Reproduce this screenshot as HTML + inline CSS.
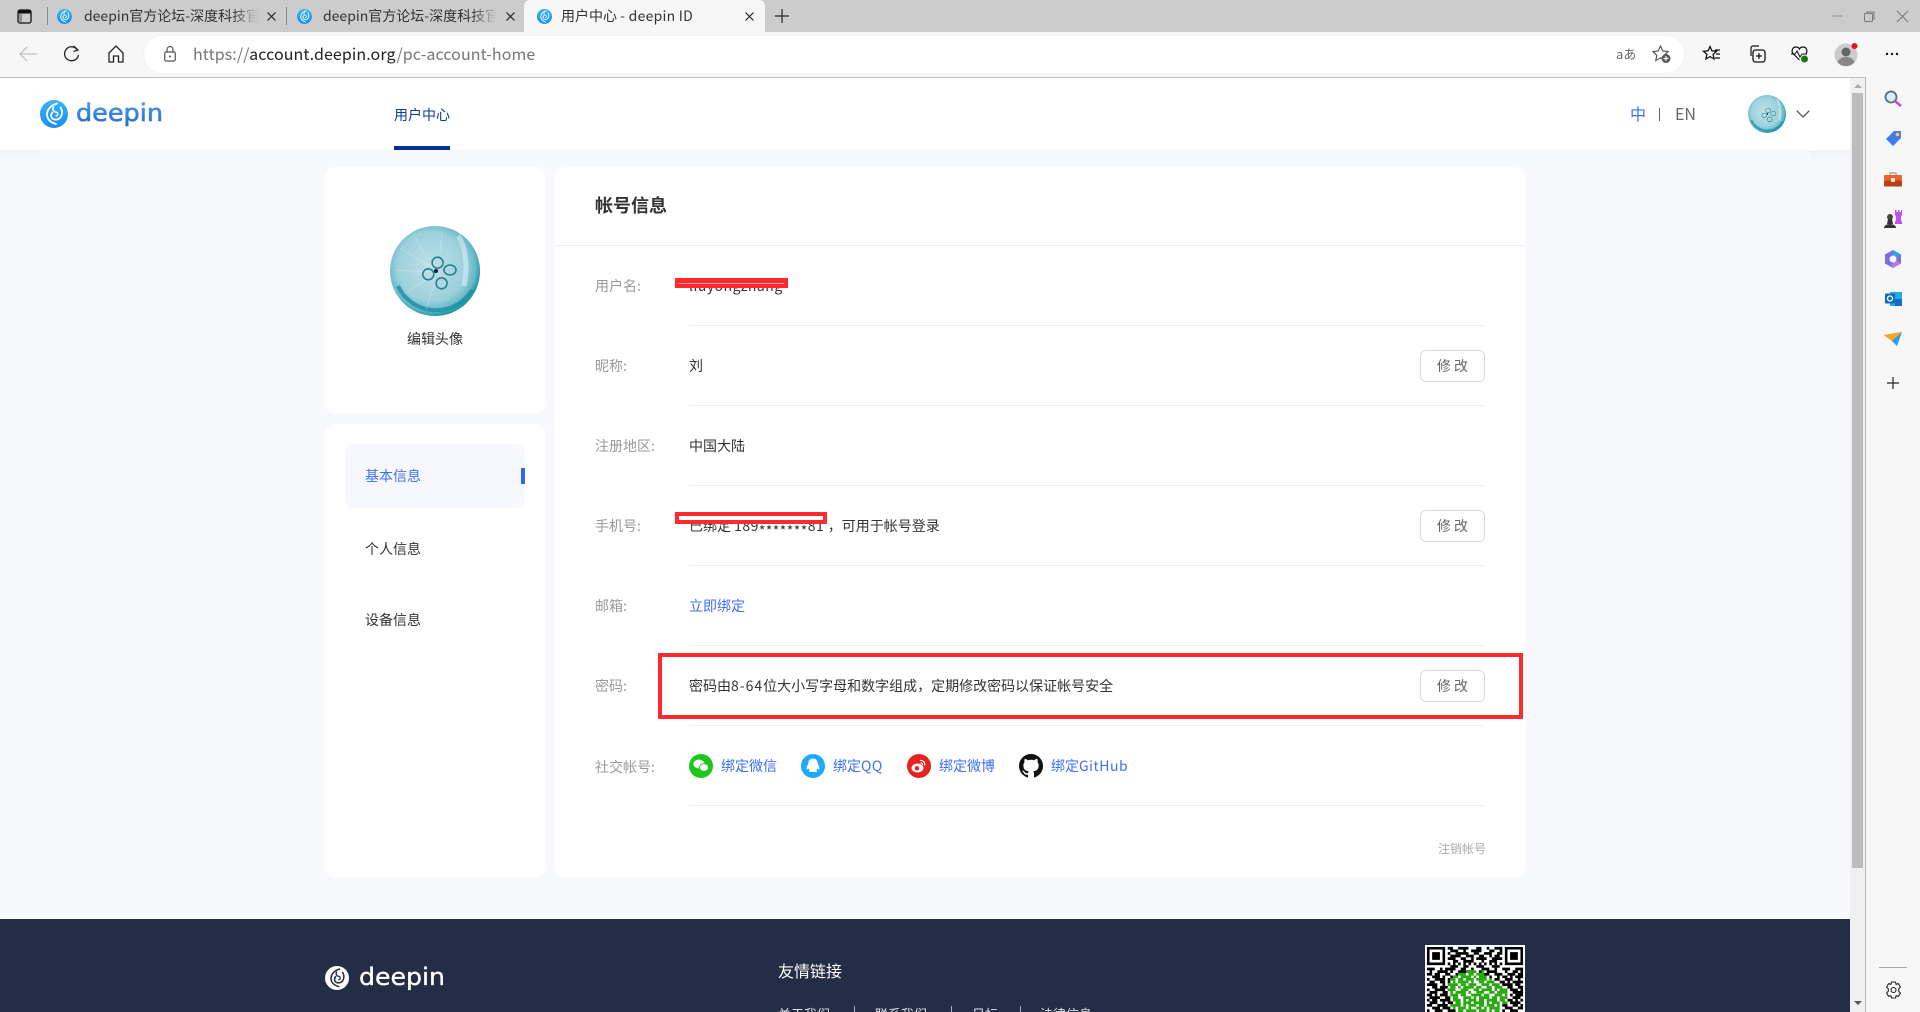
<!DOCTYPE html>
<html lang="zh-CN"><head><meta charset="utf-8"><title>用户中心 - deepin ID</title>
<style>
*{box-sizing:border-box;margin:0;padding:0}
html,body{width:1920px;height:1012px;overflow:hidden;background:#f8f9fd}
#root{position:relative;width:1920px;height:1012px;overflow:hidden;font-family:"Noto Sans CJK SC","Liberation Sans",sans-serif;color:#333}
.a{position:absolute}
.t{position:absolute;white-space:nowrap;font-size:14px;line-height:20px;height:20px}
.lab{color:#999;left:595px}
.val{left:689px}
.blue{color:#3f6ff2}
.line{position:absolute;left:689px;width:796px;height:1px;background:#eeeeee}
.btn{position:absolute;left:1420px;width:65px;height:32px;border:1px solid #d9d9d9;border-radius:6px;background:#fff;color:#666;font-size:14px;line-height:30px;text-align:center;white-space:nowrap}
.card{position:absolute;background:#fff;border-radius:10px}
.tabt{position:absolute;top:6px;font-size:14px;line-height:20px;white-space:nowrap;overflow:hidden;color:#333}
svg{position:absolute;overflow:visible}
</style></head><body><div id="root">
<svg width="0" height="0" style="position:absolute"><defs>
<linearGradient id="lg" x1="0" y1="0" x2="0" y2="1"><stop offset="0" stop-color="#38b6f8"/><stop offset="1" stop-color="#1a8cf0"/></linearGradient>
<linearGradient id="lw" x1="0" y1="0" x2="0" y2="1"><stop offset="0" stop-color="#4aa8ee"/><stop offset="1" stop-color="#2a62cc"/></linearGradient>
<radialGradient id="jf" cx="46%" cy="45%" r="55%"><stop offset="0" stop-color="#c0e1e9"/><stop offset=".7" stop-color="#9bd0dd"/><stop offset=".9" stop-color="#66b6c7"/><stop offset="1" stop-color="#1d98a9"/></radialGradient>
<symbol id="swirl" viewBox="0 0 28 28">
<circle cx="14" cy="14" r="14" fill="url(#lg)"/>
<g fill="none" stroke="#fff" stroke-linecap="round">
<path d="M17 3.500C10 5.500 5.500 11 7.500 17.500 9 21 12 23 16 24" stroke-width="1.800"/>
<path d="M20.500 7.500C24 13 21 20.500 14.500 19.500 11 18.800 10 15 12.500 12.500" stroke-width="1.800"/>
<path d="M13.500 7C12 10 14 12 16.500 12.200 18.500 13 18 15.500 16 16" stroke-width="1.500"/>
</g>
</symbol>
<symbol id="swirlw" viewBox="0 0 28 28">
<circle cx="14" cy="14" r="14" fill="#fff"/>
<g fill="none" stroke="#242d46" stroke-linecap="round">
<path d="M17 3.500C10 5.500 5.500 11 7.500 17.500 9 21 12 23 16 24" stroke-width="1.800"/>
<path d="M20.500 7.500C24 13 21 20.500 14.500 19.500 11 18.800 10 15 12.500 12.500" stroke-width="1.800"/>
<path d="M13.500 7C12 10 14 12 16.500 12.200 18.500 13 18 15.500 16 16" stroke-width="1.500"/>
</g>
</symbol>
<symbol id="jelly" viewBox="0 0 90 90">
<circle cx="45" cy="45" r="45" fill="url(#jf)"/>
<path d="M68 10c8 10 10 30 6 50" fill="none" stroke="#e6f5f8" stroke-width="5" opacity=".5"/>
<path d="M8 60A42 42 0 0 0 82 64" fill="none" stroke="#168ea1" stroke-width="4" opacity=".8"/>
<g stroke="#eef8fa" stroke-width=".7" opacity=".4"><path d="M40 40L10 22M38 46L6 44M38 52L14 68M44 58L36 84M50 26L52 6M36 32L26 12"/></g>
<g fill="none" stroke="#2c7f90" stroke-width="1.600"><circle cx="47.600" cy="36.700" r="5.500"/><circle cx="38.300" cy="48.300" r="5.500"/><ellipse cx="60" cy="44" rx="6" ry="5"/><circle cx="51.600" cy="57.300" r="5.500"/></g>
<circle cx="46" cy="45" r="2" fill="#123"/>
</symbol>
</defs></svg>

<!-- title bar -->
<div class="a" style="left:0;top:0;width:1920px;height:32px;background:#cccccc"></div>
<div class="a" style="left:524px;top:0;width:241px;height:32px;background:#f7f7f7;border-radius:6px 6px 0 0"></div>
<svg style="left:17px;top:9px" width="15" height="15" viewBox="0 0 15 15"><rect x="1" y="1" width="13" height="13" rx="2" fill="none" stroke="#111" stroke-width="1.300"/><rect x="1" y="1" width="13" height="3.500" fill="#111"/><rect x="1" y="4" width="4" height="10" fill="#555" opacity=".5"/></svg>
<div class="a" style="left:47px;top:7px;width:1px;height:18px;background:#888"></div>
<div class="a" style="left:286px;top:7px;width:1px;height:18px;background:#888"></div>
<svg style="left:57px;top:8px" width="15" height="17"><use href="#swirl" width="15" height="17"/></svg>
<svg style="left:297px;top:8px" width="15" height="17"><use href="#swirl" width="15" height="17"/></svg>
<svg style="left:537px;top:8px" width="15" height="17"><use href="#swirl" width="15" height="17"/></svg>
<div class="tabt" style="left:84px;width:174px;-webkit-mask-image:linear-gradient(90deg,#000 85%,transparent);mask-image:linear-gradient(90deg,#000 85%,transparent)">deepin官方论坛-深度科技官方</div>
<div class="tabt" style="left:323px;width:174px;-webkit-mask-image:linear-gradient(90deg,#000 85%,transparent);mask-image:linear-gradient(90deg,#000 85%,transparent)">deepin官方论坛-深度科技官方</div>
<div class="tabt" style="left:561px;width:170px">用户中心 <span style="letter-spacing:.25px">- deepin ID</span></div>
<svg style="left:267px;top:12px" width="9" height="9"><path d="M.5.500l8 8M8.500.500l-8 8" stroke="#222" stroke-width="1.200"/></svg>
<svg style="left:506px;top:12px" width="9" height="9"><path d="M.5.500l8 8M8.500.500l-8 8" stroke="#222" stroke-width="1.200"/></svg>
<svg style="left:745px;top:12px" width="9" height="9"><path d="M.5.500l8 8M8.500.500l-8 8" stroke="#222" stroke-width="1.200"/></svg>
<svg style="left:775px;top:9px" width="14" height="14"><path d="M7 0v14M0 7h14" stroke="#222" stroke-width="1.200"/></svg>
<svg style="left:1832px;top:15px" width="10" height="2"><path d="M0 1h10" stroke="#999" stroke-width="1.200"/></svg>
<svg style="left:1864px;top:11px" width="11" height="11"><path d="M3 2V1h7v7H9" fill="none" stroke="#777"/><rect x=".5" y="2.500" width="8" height="8" rx="1" fill="none" stroke="#777"/></svg>
<svg style="left:1897px;top:11px" width="11" height="11"><path d="M0 0l11 11M11 0L0 11" stroke="#777"/></svg>

<!-- toolbar -->
<div class="a" style="left:0;top:32px;width:1920px;height:46px;background:#f7f7f7"></div>
<div class="a" style="left:0;top:77px;width:1866px;height:1px;background:#bdbdbd"></div>
<svg style="left:19px;top:46px" width="18" height="16"><path d="M18 8H1M8 1L1 8l7 7" fill="none" stroke="#c4c4c4" stroke-width="1.300"/></svg>
<svg style="left:63px;top:45px" width="17" height="18" viewBox="0 0 17 18"><path d="M14.500 5A7 7 0 1 0 15.500 10" fill="none" stroke="#222" stroke-width="1.300"/><path d="M10.500 1l4.500 4-4.500 1.500" fill="none" stroke="#222" stroke-width="1.300"/></svg>
<svg style="left:108px;top:45px" width="16" height="18" viewBox="0 0 16 18"><path d="M1 8l7-7 7 7v9h-4.500v-6h-5v6H1z" fill="none" stroke="#222" stroke-width="1.300"/></svg>
<div class="a" style="left:144px;top:36px;width:1540px;height:37px;background:#fff;border-radius:18px;box-shadow:0 0 2px rgba(0,0,0,.05)"></div>
<svg style="left:164px;top:46px" width="12" height="16" viewBox="0 0 12 16"><rect x=".7" y="6" width="10.600" height="9" rx="1.500" fill="none" stroke="#555" stroke-width="1.200"/><path d="M3 6V3.500a3 3 0 0 1 6 0V6" fill="none" stroke="#555" stroke-width="1.200"/><circle cx="6" cy="10.500" r="1" fill="#555"/></svg>
<div class="t" style="left:193px;top:42px;font-size:16px;line-height:22px;height:22px;color:#777;letter-spacing:.09px">https://<span style="color:#222">account.deepin.org</span>/pc-account-home</div>
<div class="t" style="left:1616px;top:44px;font-size:13px;color:#666">aあ</div>
<svg style="left:1652px;top:45px" width="19" height="18" viewBox="0 0 19 18"><path d="M8.500 1l2.300 5 5.200.6-3.800 3.600 1 5.300-4.700-2.600L3.800 15.500l1-5.300L1 6.600 6.200 6z" fill="none" stroke="#555" stroke-width="1.200"/><circle cx="14" cy="13.500" r="4.500" fill="#555"/><path d="M14 11v5M11.500 13.500h5" stroke="#fff" stroke-width="1.200"/></svg>
<svg style="left:1703px;top:45px" width="18" height="18" viewBox="0 0 18 18"><path d="M7 1.500l1.900 4.300 4.600.5-3.400 3.100 1 4.600L7 11.600l-4.100 2.400 1-4.600L.5 6.300l4.600-.5z" fill="none" stroke="#111" stroke-width="1.300"/><path d="M12 5h5M13 9h4M12 13h5" stroke="#111" stroke-width="1.200"/></svg>
<svg style="left:1748px;top:45px" width="18" height="18" viewBox="0 0 18 18"><path d="M3 11V3a2 2 0 0 1 2-2h6" fill="none" stroke="#111" stroke-width="1.200"/><rect x="5" y="5" width="12" height="12" rx="2.500" fill="none" stroke="#111" stroke-width="1.300"/><path d="M11 8v6M8 11h6" stroke="#111" stroke-width="1.200"/></svg>
<svg style="left:1791px;top:46px" width="18" height="17" viewBox="0 0 18 17"><path d="M8.500 14L2 7.500C0 5 1.500 1 5 1c2 0 3 1 3.500 2C9 2 10 1 12 1c3.500 0 5 4 3 6.500" fill="none" stroke="#111" stroke-width="1.200"/><path d="M0 8h4l2-3 3 6 2-3h5" fill="none" stroke="#111" stroke-width="1"/><circle cx="13.500" cy="13" r="3.500" fill="#107c10"/></svg>
<svg style="left:1834px;top:43px" width="24" height="24" viewBox="0 0 24 24"><circle cx="12" cy="12" r="11.500" fill="#ccc"/><circle cx="12" cy="9" r="4.500" fill="#666"/><path d="M3.500 19c2-4 5-5 8.500-5s6.500 1 8.500 5c-2 2.500-5 4-8.500 4s-6.500-1.500-8.500-4z" fill="#888"/><circle cx="20.500" cy="3" r="3" fill="#e81123"/></svg>
<svg style="left:1885px;top:52px" width="14" height="4"><circle cx="2" cy="2" r="1.200" fill="#111"/><circle cx="7" cy="2" r="1.200" fill="#111"/><circle cx="12" cy="2" r="1.200" fill="#111"/></svg>

<!-- side bar -->
<div class="a" style="left:1866px;top:78px;width:54px;height:934px;background:#f7f7f7"></div>
<div class="a" style="left:1865px;top:77px;width:1px;height:935px;background:#bdbdbd"></div>
<div class="a" style="left:1850px;top:78px;width:15px;height:934px;background:#f0f0f0"></div>
<div class="a" style="left:1852px;top:93px;width:11px;height:775px;background:#bdbdbd"></div>
<svg style="left:1854px;top:84px" width="8" height="4"><path d="M0 4L4 0l4 4z" fill="#aaa"/></svg>
<svg style="left:1854px;top:1001px" width="8" height="4"><path d="M0 0l4 4 4-4z" fill="#555"/></svg>
<svg style="left:1884px;top:90px" width="18" height="17" viewBox="0 0 18 17"><circle cx="7" cy="7" r="5.500" fill="#d8eefb" stroke="#5a6a78" stroke-width="1.800"/><path d="M11 11l6 5" stroke="#c04be0" stroke-width="2.500"/></svg>
<svg style="left:1885px;top:130px" width="17" height="17" viewBox="0 0 17 17"><path d="M1 9l8-8h7v7l-8 8z" fill="#3f7cf0"/><circle cx="12.500" cy="4.500" r="1.800" fill="#ffc83d"/></svg>
<svg style="left:1884px;top:172px" width="18" height="15" viewBox="0 0 18 15"><path d="M6 3V1h6v2" fill="none" stroke="#aaa" stroke-width="1.500"/><rect y="3" width="18" height="5.500" rx="1" fill="#e8662a"/><rect y="8.500" width="18" height="6" rx="1" fill="#b93f13"/><rect x="7" y="6" width="4" height="4" fill="#ddd"/></svg>
<svg style="left:1884px;top:210px" width="18" height="18" viewBox="0 0 18 18"><path d="M11 0h1.500v2H14V0h1.500v2H17V0h1v5l-1 1v4l1 2v2h-7v-2l1-2V6l-1-1z" fill="#c24ff0"/><circle cx="6" cy="7" r="3" fill="#444"/><path d="M4 9h4l1 5H3zM0 18c0-2 2-4 6-4s6 2 6 4z" fill="#333"/></svg>
<svg style="left:1885px;top:250px" width="16" height="18" viewBox="0 0 16 18"><path d="M8 0l8 4.500v9L8 18 0 13.500v-9z" fill="#7b6fe0"/><path d="M8 0l8 4.500-4 3L8 5z" fill="#2aa8e8"/><path d="M16 13.500L8 18l-2-4 6-4z" fill="#b77be8"/><circle cx="8" cy="9" r="3.500" fill="#f7f7f7"/></svg>
<svg style="left:1885px;top:291px" width="17" height="16" viewBox="0 0 17 16"><rect x="5" y="1" width="12" height="14" fill="#28a8ea"/><rect x="10" y="8" width="7" height="7" fill="#0f6cbd"/><rect y="2.500" width="10" height="10" rx="1" fill="#0f6cbd"/><circle cx="5" cy="7.500" r="2.500" fill="none" stroke="#fff" stroke-width="1.300"/></svg>
<svg style="left:1884px;top:332px" width="18" height="14" viewBox="0 0 18 14"><path d="M0 3l18-3-5 14-5-5z" fill="#2b9cf0"/><path d="M0 3l18-3L8 9z" fill="#f7a81b"/></svg>
<svg style="left:1887px;top:377px" width="12" height="12"><path d="M6 0v12M0 6h12" stroke="#222" stroke-width="1.200"/></svg>
<div class="a" style="left:1879px;top:967px;width:28px;height:1px;background:#aaa"></div>
<svg style="left:1885px;top:981px" width="17" height="18" viewBox="0 0 17 18"><path d="M6.500 1h4l.6 2.300 2.300-.7 2 3.400-1.700 1.800v2.400l1.700 1.800-2 3.400-2.300-.7-.6 2.300h-4l-.6-2.300-2.300.7-2-3.400 1.700-1.800V7.800L1.600 6l2-3.400 2.300.7z" fill="none" stroke="#222" stroke-width="1.100" stroke-linejoin="round"/><circle cx="8.500" cy="9" r="2.500" fill="none" stroke="#222" stroke-width="1.100"/></svg>

<!-- page -->
<div class="a" style="left:0;top:78px;width:1850px;height:841px;background:#f8f9fd"></div>
<div class="a" style="left:0;top:150px;width:40px;height:10px;background:linear-gradient(#f2f3f6,#f8f9fd)"></div>
<div class="a" style="left:1810px;top:150px;width:40px;height:10px;background:linear-gradient(#f2f3f6,#f8f9fd)"></div>
<div class="a" style="left:0;top:78px;width:1850px;height:72px;background:#fff"></div>
<svg style="left:40px;top:100px" width="28" height="28"><use href="#swirl" width="28" height="28"/></svg>
<svg style="left:74px;top:95px" width="92" height="36"><text x="2" y="26" font-family="DejaVu Sans" font-size="24" fill="url(#lw)" stroke="url(#lw)" stroke-width=".6" textLength="87" lengthAdjust="spacingAndGlyphs">deepin</text></svg>
<div class="t" style="left:394px;top:105px;color:#0b3a9e">用户中心</div>
<div class="a" style="left:394px;top:146px;width:56px;height:4px;background:#05309a"></div>
<div class="t" style="left:1630px;top:102px;font-size:16px;line-height:22px;height:22px;color:#3f6ff2">中</div>
<div class="a" style="left:1659px;top:108px;width:1px;height:13px;background:#666"></div>
<div class="t" style="left:1675px;top:102px;font-size:16px;line-height:22px;height:22px;color:#666">EN</div>
<svg style="left:1748px;top:95px" width="38" height="38"><use href="#jelly" width="38" height="38"/></svg>
<svg style="left:1796px;top:110px" width="14" height="8"><path d="M.7.700L7 7l6.300-6.300" fill="none" stroke="#555" stroke-width="1.300"/></svg>

<div class="card" style="left:325px;top:167px;width:220px;height:247px"></div>
<svg style="left:390px;top:226px" width="90" height="90"><use href="#jelly" width="90" height="90"/></svg>
<div class="t" style="left:407px;top:329px">编辑头像</div>

<div class="card" style="left:325px;top:424px;width:220px;height:454px"></div>
<div class="a" style="left:345px;top:444px;width:180px;height:64px;background:#f6f8fd;border-radius:10px"></div>
<div class="a" style="left:521px;top:468px;width:4px;height:16px;background:#3366f0"></div>
<div class="t blue" style="left:365px;top:466px">基本信息</div>
<div class="t" style="left:365px;top:539px">个人信息</div>
<div class="t" style="left:365px;top:610px">设备信息</div>

<div class="card" style="left:555px;top:167px;width:970px;height:711px"></div>
<div class="t" style="left:595px;top:192px;font-size:18px;font-weight:bold;line-height:26px;height:26px;color:#333">帐号信息</div>
<div class="a" style="left:555px;top:245px;width:970px;height:1px;background:#eeeeee"></div>

<div class="t lab" style="top:276px">用户名:</div>
<div class="t val" style="top:276px;letter-spacing:.5px">liuyongzhang</div>
<div class="line" style="top:325px"></div>
<div class="t lab" style="top:356px">昵称:</div>
<div class="t val" style="top:356px">刘</div>
<div class="btn" style="top:350px">修 改</div>
<div class="line" style="top:405px"></div>
<div class="t lab" style="top:436px">注册地区:</div>
<div class="t val" style="top:436px">中国大陆</div>
<div class="line" style="top:485px"></div>
<div class="t lab" style="top:516px">手机号:</div>
<div class="t val" style="top:516px">已绑定 <span style="letter-spacing:.45px">189<span style="position:relative;top:5px">*******</span>81 </span>，可用于帐号登录</div>
<div class="btn" style="top:510px">修 改</div>
<div class="line" style="top:565px"></div>
<div class="t lab" style="top:596px">邮箱:</div>
<div class="t val blue" style="top:596px">立即绑定</div>
<div class="line" style="top:645px"></div>
<div class="t lab" style="top:676px">密码:</div>
<div class="t val" style="top:676px">密码由<span style="letter-spacing:1px">8-64</span>位大小写字母和数字组成，定期修改密码以保证帐号安全</div>
<div class="btn" style="top:670px">修 改</div>
<div class="line" style="top:725px"></div>
<div class="t lab" style="top:757px">社交帐号:</div>
<svg style="left:689px;top:754px" width="24" height="24" viewBox="0 0 24 24"><circle cx="12" cy="12" r="12" fill="#1ac81a"/><ellipse cx="10" cy="10" rx="5.500" ry="4.500" fill="#fff"/><ellipse cx="15" cy="13.500" rx="4.500" ry="3.800" fill="#fff" stroke="#1ac81a" stroke-width=".8"/></svg>
<div class="t blue" style="left:721px;top:756px">绑定微信</div>
<svg style="left:801px;top:754px" width="24" height="24" viewBox="0 0 24 24"><circle cx="12" cy="12" r="12" fill="#1ea9ff"/><path d="M12 4.500c3.300 0 4.800 2.800 4.800 5.500 1 1.500 2 3.500 1.500 5.500-.6.300-1.300-.4-1.800-1.200-.2 1-.8 2-1.500 2.500 1 .3 1.300.8 1 1.200H8c-.3-.4 0-.9 1-1.200-.7-.5-1.300-1.500-1.500-2.500-.5.800-1.200 1.500-1.800 1.200-.5-2 .5-4 1.500-5.500 0-2.700 1.500-5.500 4.800-5.500z" fill="#fff"/></svg>
<div class="t blue" style="left:833px;top:756px">绑定<span style="letter-spacing:.5px">QQ</span></div>
<svg style="left:907px;top:754px" width="24" height="24" viewBox="0 0 24 24"><circle cx="12" cy="12" r="12" fill="#e6231e"/><ellipse cx="10.500" cy="14" rx="6" ry="4.500" fill="#fff"/><circle cx="10" cy="14.300" r="2.200" fill="#e6231e"/><path d="M13 6.500c3-.5 5.500 2 4.500 5M13.500 9c1.500-.2 2.300.8 2 2" fill="none" stroke="#fff" stroke-width="1.100"/></svg>
<div class="t blue" style="left:939px;top:756px">绑定微博</div>
<svg style="left:1019px;top:754px" width="24" height="24" viewBox="0 0 16 16"><path fill="#111" d="M8 0C3.580 0 0 3.580 0 8c0 3.540 2.290 6.530 5.470 7.590.4.070.55-.17.55-.38 0-.19-.01-.82-.01-1.490-2.010.37-2.530-.49-2.690-.94-.09-.23-.48-.94-.82-1.130-.28-.15-.68-.52-.01-.53.630-.01 1.080.58 1.230.82.720 1.210 1.870.87 2.330.66.070-.52.280-.87.510-1.070-1.780-.2-3.640-.89-3.640-3.950 0-.87.310-1.590.820-2.150-.08-.2-.36-1.020.08-2.120 0 0 .67-.21 2.200.82.640-.18 1.320-.27 2-.27s1.360.09 2 .27c1.530-1.040 2.200-.82 2.200-.82.440 1.100.160 1.920.080 2.120.51.560.82 1.270.82 2.150 0 3.070-1.870 3.750-3.650 3.950.29.250.54.730.54 1.480 0 1.070-.01 1.930-.01 2.200 0 .21.150.46.550.38A8.013 8.013 0 0 0 16 8c0-4.420-3.580-8-8-8z"/></svg>
<div class="t blue" style="left:1051px;top:756px">绑定<span style="letter-spacing:.5px">GitHub</span></div>
<div class="line" style="top:805px"></div>
<div class="t" style="left:1438px;top:839px;font-size:12px;color:#aaa">注销帐号</div>

<!-- annotations -->
<div class="a" style="left:675px;top:278px;width:113px;height:10px;background:#ff2a2e"></div>
<div class="a" style="left:679px;top:283px;width:105px;height:1px;background:#ff9a9a"></div>
<div class="a" style="left:675px;top:512px;width:152px;height:12px;border:4px solid #ff2a2e;background:#fff"></div>
<div class="a" style="left:658px;top:653px;width:865px;height:66px;border:4px solid #ff2a2e"></div>

<!-- footer -->
<div class="a" style="left:0;top:919px;width:1850px;height:93px;background:#242d46"></div>
<svg style="left:325px;top:966px" width="24" height="24"><use href="#swirlw" width="24" height="24"/></svg>
<svg style="left:359px;top:959px" width="88" height="36"><text x="0" y="26" font-family="DejaVu Sans" font-size="24" fill="#fff" stroke="#fff" stroke-width=".3" textLength="86" lengthAdjust="spacingAndGlyphs">deepin</text></svg>
<div class="t" style="left:778px;top:959px;font-size:16px;line-height:22px;height:22px;color:#fff">友情链接</div>
<div class="t" style="left:778px;top:1004px;font-size:13px;color:#dfe2ea">关于我们</div>
<div class="a" style="left:854px;top:1006px;width:1px;height:14px;background:#aab"></div>
<div class="t" style="left:875px;top:1004px;font-size:13px;color:#dfe2ea">联系我们</div>
<div class="a" style="left:951px;top:1006px;width:1px;height:14px;background:#aab"></div>
<div class="t" style="left:972px;top:1004px;font-size:13px;color:#dfe2ea">日标</div>
<div class="a" style="left:1020px;top:1006px;width:1px;height:14px;background:#aab"></div>
<div class="t" style="left:1040px;top:1004px;font-size:13px;color:#dfe2ea">法律信息</div>

<svg style="left:1425px;top:945px" width="100" height="67" viewBox="0 0 38.500 25.800" preserveAspectRatio="xMinYMin slice">
<rect width="38.500" height="38.500" fill="#fff"/>
<g fill="none" stroke="#000" transform="translate(.75 .75)">
<path d="M.5.500h6v6h-6zM30.500.500h6v6h-6z" stroke-width="1"/>
<path d="M2 2h3v3H2zM32 2h3v3h-3z" fill="#000" stroke="none"/>
<g stroke-width="1.050">
<path d="M8 .5h2M12 .5h4M19 .5h2M23 .5h1M26 .5h3"/>
<path d="M9 1.500h3M14 1.500h1M17 1.500h4M24 1.500h2M28 1.500h1"/>
<path d="M8 2.500h1M11 2.500h5M18 2.500h2M22 2.500h3M27 2.500h2"/>
<path d="M9 3.500h4M15 3.500h3M20 3.500h2M24 3.500h1M26 3.500h2"/>
<path d="M8 4.500h3M13 4.500h2M17 4.500h1M19 4.500h4M25 4.500h4"/>
<path d="M10 5.500h2M14 5.500h4M21 5.500h1M24 5.500h3"/>
<path d="M8 6.500h1M10 6.500h1M12 6.500h1M14 6.500h1M16 6.500h1M18 6.500h1M20 6.500h1M22 6.500h1M24 6.500h1M26 6.500h1M28 6.500h1"/>
<path d="M9 7.500h3M14 7.500h2M19 7.500h3M25 7.500h3"/>
<path d="M0 8.500h3M5 8.500h1M7 8.500h4M13 8.500h2M17 8.500h1M21 8.500h3M26 8.500h1M29 8.500h3M34 8.500h3"/>
<path d="M1 9.500h1M4 9.500h4M9 9.500h1M12 9.500h5M20 9.500h1M23 9.500h4M30 9.500h1M33 9.500h2M36 9.500h1"/>
<path d="M0 10.500h2M3 10.500h2M7 10.500h2M11 10.500h1M22 10.500h2M26 10.500h3M31 10.500h3M35 10.500h2"/>
<path d="M2 11.500h3M6 11.500h1M9 11.500h2M24 11.500h1M27 11.500h1M29 11.500h2M32 11.500h1M34 11.500h3"/>
<path d="M0 12.500h1M3 12.500h4M8 12.500h1M26 12.500h2M30 12.500h3M35 12.500h1"/>
<path d="M1 13.500h2M5 13.500h2M8 13.500h1M28 13.500h2M31 13.500h1M33 13.500h4"/>
<path d="M0 14.500h4M6 14.500h1M29 14.500h4M34 14.500h2"/>
<path d="M2 15.500h2M5 15.500h3M31 15.500h2M35 15.500h2"/>
<path d="M0 16.500h1M3 16.500h4M32 16.500h3M36 16.500h1"/>
<path d="M1 17.500h3M6 17.500h2M33 17.500h2M35 17.500h2"/>
<path d="M0 18.500h2M3 18.500h1M5 18.500h3M32 18.500h1M34 18.500h3"/>
<path d="M1 19.500h4M7 19.500h2M33 19.500h3"/>
<path d="M0 20.500h1M2 20.500h2M5 20.500h4M31 20.500h2M34 20.500h1M36 20.500h1"/>
<path d="M1 21.500h3M6 21.500h1M8 21.500h2M32 21.500h4"/>
<path d="M0 22.500h2M4 22.500h4M29 22.500h2M33 22.500h2M36 22.500h1"/>
<path d="M2 23.500h3M6 23.500h3M30 23.500h3M35 23.500h2"/>
<path d="M0 24.500h1M3 24.500h3M8 24.500h3M29 24.500h1M32 24.500h3"/>
</g></g>
<g stroke="#2aaa12" fill="none" stroke-width="1.050" transform="translate(.75 .75)">
<path d="M15 9.500h4M21 9.500h1"/>
<path d="M12 10.500h3M16 10.500h2M19 10.500h3"/>
<path d="M10 11.500h2M13 11.500h4M18 11.500h1M20 11.500h3"/>
<path d="M9 12.500h2M12 12.500h2M15 12.500h3M19 12.500h4M24 12.500h1"/>
<path d="M10 13.500h1M12 13.500h4M17 13.500h1M20 13.500h2M23 13.500h3"/>
<path d="M8 14.500h4M13 14.500h2M16 14.500h3M21 14.500h3M25 14.500h3"/>
<path d="M9 15.500h2M12 15.500h1M14 15.500h4M19 15.500h2M23 15.500h2M26 15.500h3"/>
<path d="M8 16.500h3M13 16.500h3M18 16.500h2M21 16.500h4M26 16.500h1M28 16.500h3"/>
<path d="M9 17.500h1M11 17.500h4M16 17.500h1M19 17.500h3M24 17.500h2M27 17.500h4"/>
<path d="M9 18.500h3M13 18.500h2M17 18.500h4M22 18.500h2M26 18.500h3M30 18.500h1"/>
<path d="M10 19.500h2M14 19.500h3M18 19.500h1M20 19.500h4M25 19.500h2M28 19.500h3"/>
<path d="M10 20.500h3M14 20.500h1M16 20.500h3M20 20.500h2M23 20.500h4M28 20.500h2"/>
<path d="M11 21.500h2M14 21.500h3M18 21.500h4M23 21.500h1M25 21.500h3M29 21.500h2"/>
<path d="M9 22.500h4M14 22.500h1M16 22.500h3M20 22.500h2M23 22.500h3M27 22.500h1"/>
<path d="M10 23.500h1M12 23.500h3M16 23.500h1M19 23.500h2M22 23.500h1M24 23.500h4"/>
<path d="M12 24.500h2M15 24.500h4M20 24.500h3M24 24.500h1M26 24.500h2"/>
</g>
</svg>
</div></body></html>
